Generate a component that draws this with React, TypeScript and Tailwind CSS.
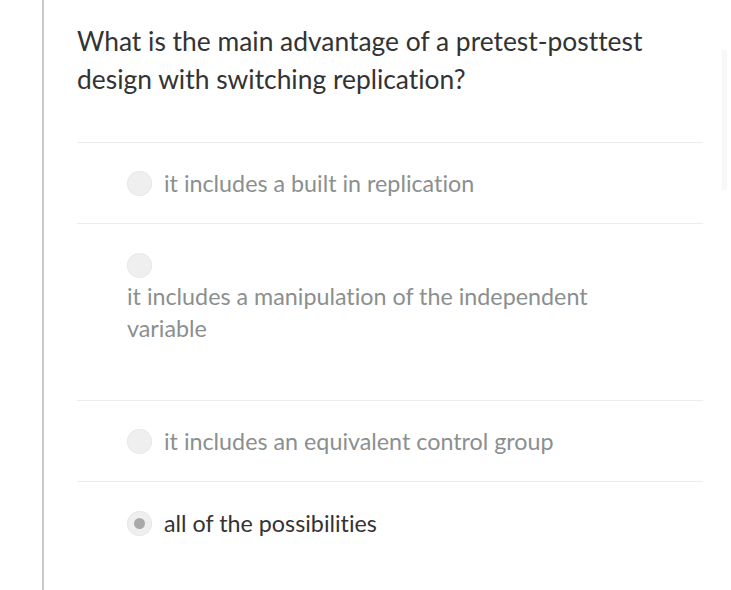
const options = [
  { id: 'a', label: 'it includes a built in replication' },
  { id: 'b', label: 'it includes a manipulation of the independent variable' },
  { id: 'c', label: 'it includes an equivalent control group' },
  { id: 'd', label: 'all of the possibilities' },
];

function Radio({ checked }: { checked?: boolean }) {
  return (
    <span className="flex h-[25px] w-[25px] shrink-0 items-center justify-center rounded-full bg-[#efefef] shadow-[inset_0_0_0_1px_#e8e8e8]">
      {checked && <span className="h-[11px] w-[11px] rounded-full bg-[#a9a9a9]" />}
    </span>
  );
}

export default function App() {
  return (
    <div className="flex h-[590px] w-[731px] overflow-hidden bg-white [font-variant-ligatures:none]" style={{ fontFamily: 'Lato, "Open Sans", sans-serif' }}>
      <div className="ml-[42px] flex w-[626px] flex-col border-l-2 border-[#cacaca] pl-[33px] box-content">
        {/* question */}
        <h1 className="pt-[22px] text-[26.4px] leading-[38px] font-normal text-[#333]">
          What is the main advantage of a pretest-posttest
          <br />
          design with switching replication?
        </h1>

        <div className="mt-[44px] border-t border-[#ececec]">
          {/* option a */}
          <label className="flex h-[80px] items-center gap-3 pl-[50px] text-[23.3px] text-[#8b8f8f]">
            <Radio />
            <span>{options[0].label}</span>
          </label>

          {/* option b: radio sits above the wrapped label */}
          <label className="flex h-[177px] flex-col border-t border-[#ececec] pt-[29px] pl-[50px] text-[23.3px] leading-[32px] text-[#8b8f8f]">
            <Radio />
            <span className="mt-[2px] w-[500px]">{options[1].label}</span>
          </label>

          {/* option c */}
          <label className="flex h-[81px] items-center gap-3 border-t border-[#ececec] pl-[50px] text-[23.3px] text-[#8b8f8f]">
            <Radio />
            <span>{options[2].label}</span>
          </label>

          {/* option d, selected */}
          <label className="flex h-[84px] items-center gap-3 border-t border-[#ececec] pl-[50px] text-[23.3px] text-[#333]">
            <Radio checked />
            <span>{options[3].label}</span>
          </label>
        </div>
      </div>
      <div className="ml-[19px] mt-[50px] h-[140px] w-[5px] bg-[#f8f8f8]" />
    </div>
  );
}
